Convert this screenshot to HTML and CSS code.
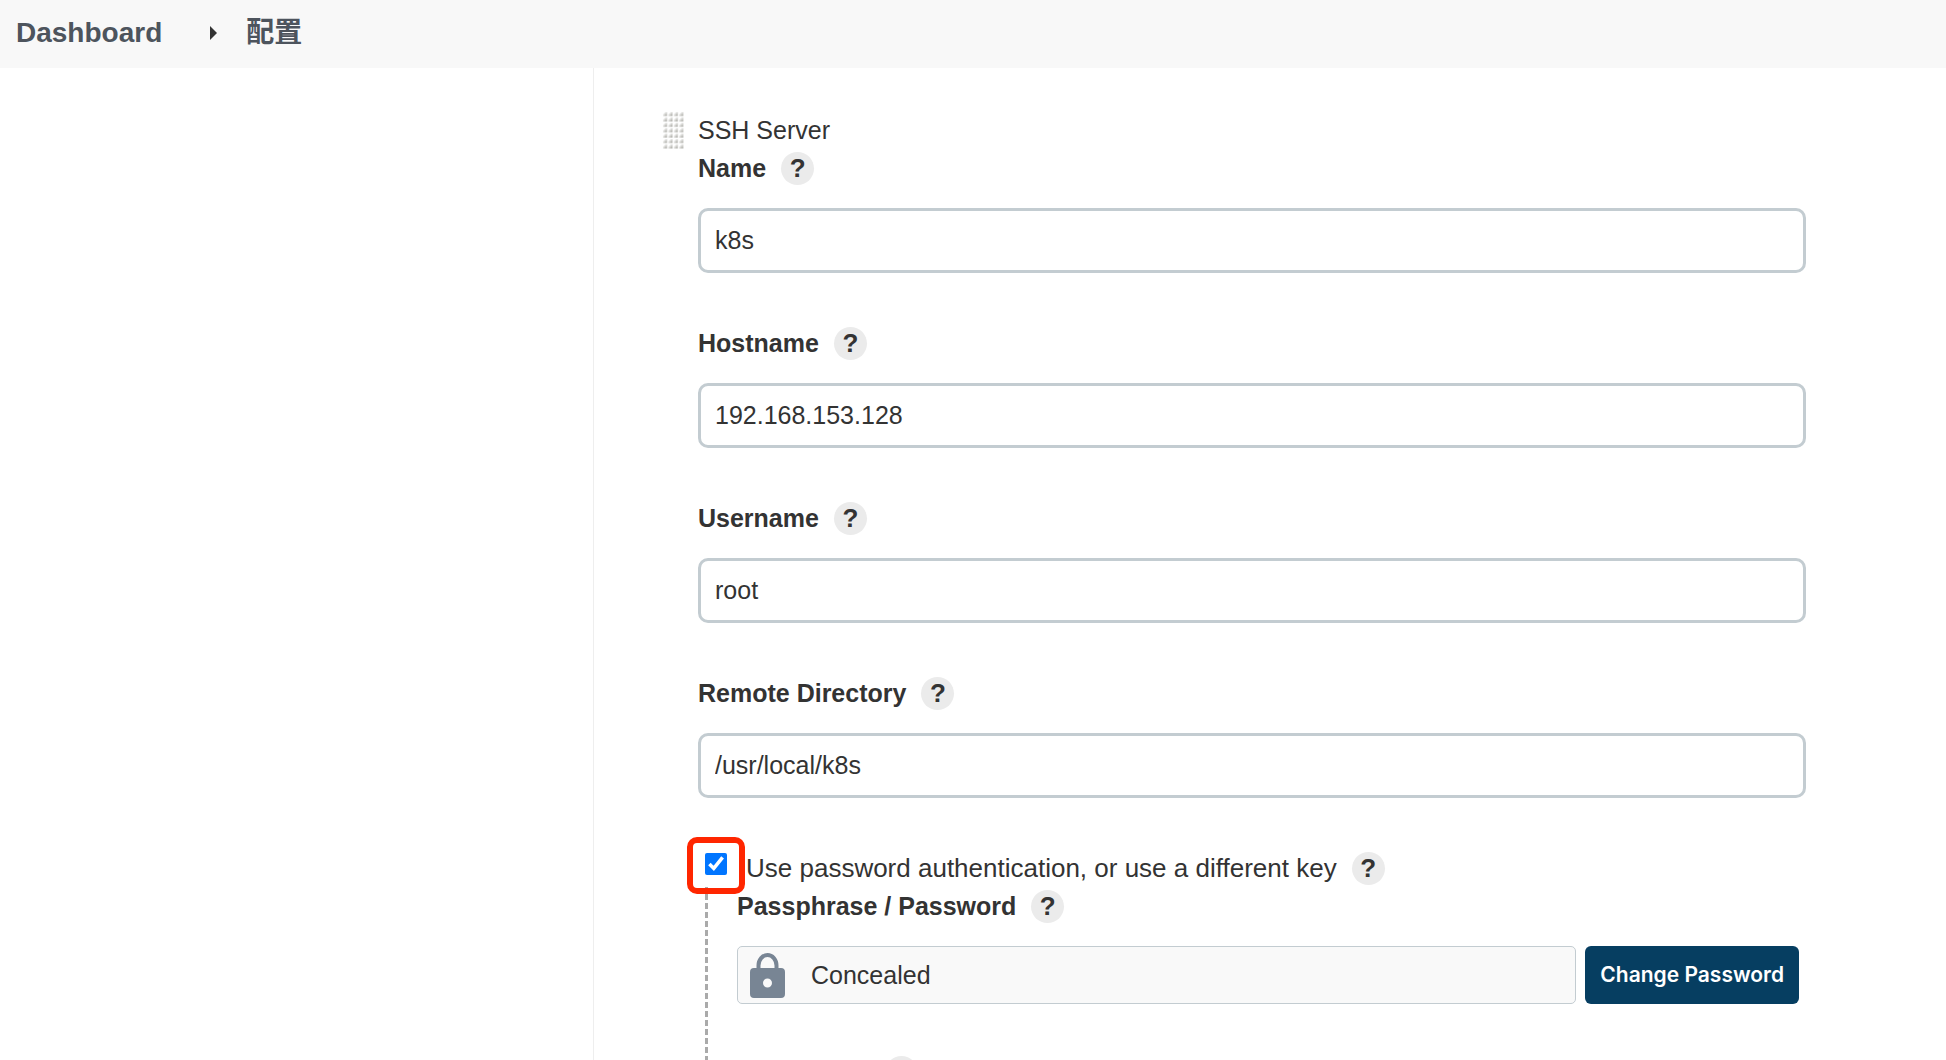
FILE: index.html
```html
<!DOCTYPE html>
<html lang="zh-CN">
<head>
<meta charset="utf-8">
<title>配置 - Dashboard</title>
<link rel="stylesheet" href="styles.css">
</head>
<body>
<nav class="breadcrumbs" aria-label="Breadcrumb">
  <a class="crumb" href="#">Dashboard</a>
  <svg class="crumb-arrow" width="7" height="14" viewBox="0 0 7 14" aria-hidden="true"><path d="M0 0L7 7L0 14Z"/></svg>
  <a class="crumb" href="#">配置</a>
</nav>
<div class="page">
  <aside class="side-panel"></aside>
  <main class="main-panel">
    <form class="server">
      <svg class="grip" width="22" height="38" viewBox="0 0 22 38" aria-hidden="true">
        <defs>
          <linearGradient id="shade" x1="0" y1="0" x2="1" y2="1">
            <stop offset="0.2" stop-color="#fff"/>
            <stop offset="1" stop-color="#999992"/>
          </linearGradient>
          <pattern id="dots" width="5.4" height="5.4" patternUnits="userSpaceOnUse">
            <rect x="1" y="1" width="4" height="4" fill="url(#shade)"/>
          </pattern>
        </defs>
        <rect width="22" height="38" fill="url(#dots)"/>
      </svg>
      <div class="fields">
        <div class="row title">SSH Server</div>
        <div class="field">
          <div class="row"><label for="name">Name</label><button type="button" class="help" aria-label="Help for Name">?</button></div>
          <input class="text-input" id="name" type="text" value="k8s">
        </div>
        <div class="field">
          <div class="row"><label for="hostname">Hostname</label><button type="button" class="help" aria-label="Help for Hostname">?</button></div>
          <input class="text-input" id="hostname" type="text" value="192.168.153.128">
        </div>
        <div class="field">
          <div class="row"><label for="username">Username</label><button type="button" class="help" aria-label="Help for Username">?</button></div>
          <input class="text-input" id="username" type="text" value="root">
        </div>
        <div class="field">
          <div class="row"><label for="remote">Remote Directory</label><button type="button" class="help" aria-label="Help for Remote Directory">?</button></div>
          <input class="text-input" id="remote" type="text" value="/usr/local/k8s">
        </div>
        <div class="row check-row">
          <span class="check-wrap"><input class="check" id="use-password" type="checkbox" checked></span>
          <label class="check-label" for="use-password">Use password authentication, or use a different key</label>
          <button type="button" class="help" aria-label="Help for password authentication">?</button>
        </div>
        <div class="nested">
          <svg class="guide" width="3" height="400" aria-hidden="true"><path d="M1.5 0V400" stroke="#aaa" stroke-width="3" stroke-dasharray="6 3" stroke-dashoffset="2"/></svg>
          <div class="nested-fields">
            <div class="field">
              <div class="row"><span class="label">Passphrase / Password</span><button type="button" class="help" aria-label="Help for Passphrase / Password">?</button></div>
              <div class="secret">
                <div class="concealed">
                  <svg class="lock" width="35" height="45" viewBox="0 0 35 45" aria-hidden="true">
                    <path d="M8.500 17V12.500a9 10.500 0 0 1 18 0V17" fill="none" stroke="#788594" stroke-width="4"/>
                    <path fill-rule="evenodd" fill="#788594" d="M4 15H31a4 4 0 0 1 4 4V41a4 4 0 0 1-4 4H4a4 4 0 0 1-4-4V19a4 4 0 0 1 4-4ZM17.500 25.500a4.500 4.500 0 1 0 0 9a4.500 4.500 0 1 0 0-9Z"/>
                  </svg>
                  <span>Concealed</span>
                </div>
                <button type="button" class="change">Change Password</button>
              </div>
            </div>
            <div class="field">
              <div class="row"><label for="key-path">Path to key</label><button type="button" class="help" aria-label="Help for Path to key">?</button></div>
              <input class="text-input" id="key-path" type="text">
            </div>
          </div>
        </div>
      </div>
    </form>
  </main>
</div>
</body>
</html>
```
FILE: styles.css
```css
* {
  box-sizing: border-box;
}

body {
  display: flex;
  flex-direction: column;
  height: 100vh;
  margin: 0;
  overflow: hidden;
  background: #fff;
  color: #333;
  font: 25px/38px "Liberation Sans", "Noto Sans CJK SC", sans-serif;
}

input,
button {
  margin: 0;
  color: inherit;
  font: inherit;
}

.breadcrumbs {
  display: flex;
  flex: none;
  align-items: center;
  height: 68px;
  padding: 0 16px 3px;
  background: #f8f8f8;
}

.crumb {
  color: #4d545d;
  font-size: 28px;
  font-weight: bold;
  text-decoration: none;
}

.crumb-arrow {
  margin: 0 29px 0 48px;
  fill: #333;
}

.page {
  display: flex;
  flex: 1;
  min-height: 0;
}

.side-panel {
  flex: none;
  width: 593px;
}

.main-panel {
  flex: 1;
  padding: 43px 140px 0 68px;
  border-left: 1px solid #eee;
  overflow: hidden;
}

.server {
  display: flex;
  gap: 14px;
}

.grip {
  flex: none;
}

.fields,
.nested-fields {
  flex: 1;
  min-width: 0;
}

.row {
  display: flex;
  align-items: center;
  gap: 15px;
  height: 38px;
}

.field {
  margin-bottom: 51px;
}

.nested .field {
  margin-bottom: 49px;
}

.field .row {
  margin-bottom: 21px;
  font-weight: bold;
}

.help {
  flex: none;
  width: 33px;
  height: 33px;
  padding: 0;
  border: 0;
  border-radius: 50%;
  background: #ebebeb;
  font-size: 26px;
  font-weight: bold;
  line-height: 33px;
}

.text-input {
  display: block;
  width: 100%;
  height: 65px;
  padding: 0 14px;
  border: 3px solid #c3ccd1;
  border-radius: 10px;
  background: #fff;
}

.check-wrap {
  position: relative;
  display: flex;
  margin: 0 4px 8px 7px;
}

.check-wrap::after {
  position: absolute;
  inset: -16px -18px -19px;
  border: 6px solid #ff2600;
  border-radius: 10px;
  content: "";
  pointer-events: none;
}

.check {
  width: 22px;
  height: 22px;
  accent-color: #0075ff;
}

.check-label {
  font-size: 26px;
  font-weight: 500;
}

.nested {
  display: flex;
  gap: 29px;
  padding: 0 7px;
}

.guide {
  flex: none;
}

.secret {
  display: flex;
  gap: 9px;
}

.concealed {
  display: flex;
  flex: 1;
  align-items: center;
  gap: 26px;
  height: 58px;
  padding: 0 12px;
  border: 1px solid #c3ccd1;
  border-radius: 5px;
  background: #f9f9f9;
}

.change {
  flex: none;
  height: 58px;
  padding: 0 15px;
  border: 0;
  border-radius: 6px;
  background: #063e61;
  color: #fff;
  font: 600 21px/58px Inter, sans-serif;
}
```
